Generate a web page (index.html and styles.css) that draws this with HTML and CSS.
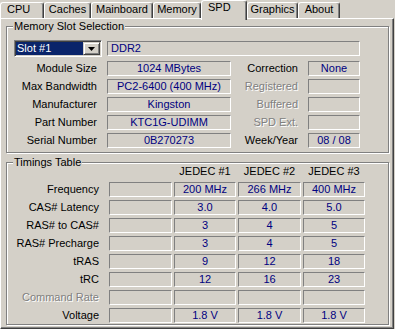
FILE: index.html
```html
<!DOCTYPE html>
<html>
<head>
<meta charset="utf-8">
<link rel="stylesheet" href="styles.css">
</head>
<body>
<div class="tabs">
  <div class="tab t-cpu">CPU</div>
  <div class="tab t-caches">Caches</div>
  <div class="tab t-main">Mainboard</div>
  <div class="tab t-mem">Memory</div>
  <div class="tab sel t-spd">SPD</div>
  <div class="tab t-gfx">Graphics</div>
  <div class="tab t-about">About</div>
</div>
<div class="panel">
  <div class="group g-slot">
    <span class="group-title">Memory Slot Selection</span>
    <div class="slot-row">
      <div class="combo">
        <div class="combo-sel">Slot #1</div>
        <div class="combo-btn"><svg width="7" height="4" viewBox="0 0 7 4"><polygon points="0,0 7,0 3.5,4" fill="#000"/></svg></div>
      </div>
      <div class="f f-type">DDR2</div>
    </div>
    <div class="info">
      <div class="lbl">Module Size</div><div class="f">1024 MBytes</div>
      <div class="lbl">Correction</div><div class="f">None</div>
      <div class="lbl">Max Bandwidth</div><div class="f">PC2-6400 (400 MHz)</div>
      <div class="lbl dis">Registered</div><div class="f"></div>
      <div class="lbl">Manufacturer</div><div class="f">Kingston</div>
      <div class="lbl dis">Buffered</div><div class="f"></div>
      <div class="lbl">Part Number</div><div class="f">KTC1G-UDIMM</div>
      <div class="lbl dis">SPD Ext.</div><div class="f"></div>
      <div class="lbl">Serial Number</div><div class="f">0B270273</div>
      <div class="lbl">Week/Year</div><div class="f">08 / 08</div>
    </div>
  </div>
  <div class="group g-timings">
    <span class="group-title">Timings Table</span>
    <div class="timings">
      <div></div><div></div><div class="hd">JEDEC #1</div><div class="hd">JEDEC #2</div><div class="hd">JEDEC #3</div>
      <div class="lbl">Frequency</div><div class="f"></div><div class="f">200 MHz</div><div class="f">266 MHz</div><div class="f">400 MHz</div>
      <div class="lbl">CAS# Latency</div><div class="f"></div><div class="f">3.0</div><div class="f">4.0</div><div class="f">5.0</div>
      <div class="lbl">RAS# to CAS#</div><div class="f"></div><div class="f">3</div><div class="f">4</div><div class="f">5</div>
      <div class="lbl">RAS# Precharge</div><div class="f"></div><div class="f">3</div><div class="f">4</div><div class="f">5</div>
      <div class="lbl">tRAS</div><div class="f"></div><div class="f">9</div><div class="f">12</div><div class="f">18</div>
      <div class="lbl">tRC</div><div class="f"></div><div class="f">12</div><div class="f">16</div><div class="f">23</div>
      <div class="lbl dis">Command Rate</div><div class="f"></div><div class="f"></div><div class="f"></div><div class="f"></div>
      <div class="lbl">Voltage</div><div class="f"></div><div class="f">1.8 V</div><div class="f">1.8 V</div><div class="f">1.8 V</div>
    </div>
  </div>
</div>
</body>
</html>
```
FILE: styles.css
```css
html, body {
  margin: 0;
  padding: 0;
}
body {
  background: #d4d0c8;
  font-family: "Liberation Sans", Arial, sans-serif;
  font-size: 11px;
  color: #000;
  width: 395px;
  height: 329px;
  overflow: hidden;
}

/* Tabs */
.tabs {
  display: flex;
  align-items: flex-end;
  height: 18px;
  position: relative;
  z-index: 2;
}
.tab {
  box-sizing: border-box;
  height: 16px;
  border: 1px solid #fff;
  border-bottom: none;
  border-right-color: #404040;
  box-shadow: inset -1px 0 #808080;
  border-radius: 3px 3px 0 0;
  background: #d4d0c8;
  line-height: 13px;
  text-align: center;
  white-space: nowrap;
}
.tab.sel {
  height: 20px;
  margin-bottom: -2px;
}
.t-cpu { width: 44px; text-align: left; padding-left: 6px; }
.t-caches { width: 47px; }
.t-main { width: 62px; }
.t-mem { width: 48px; }
.t-spd { width: 46px; text-align: left; padding-left: 6px; }
.t-gfx { width: 51px; }
.t-about { width: 42px; }

/* Panel */
.panel {
  box-sizing: border-box;
  width: 394px;
  height: 311px;
  border: 1px solid;
  border-color: #fff #404040 #404040 #fff;
  box-shadow: inset -1px -1px #808080;
  padding: 7px 0 0 5px;
  position: relative;
  z-index: 1;
}

/* Group boxes */
.group {
  position: relative;
  box-sizing: border-box;
  width: 383px;
  border: 1px solid #808080;
  box-shadow: inset 1px 1px #fff, 1px 1px #fff;
}
.group-title {
  position: absolute;
  top: -7px;
  left: 6px;
  padding: 0 1px;
  line-height: 13px;
  background: #d4d0c8;
  white-space: nowrap;
}
.g-slot {
  padding: 13px 0 4px 7px;
}
.g-timings {
  margin-top: 9px;
  padding: 1px 0 1px 7px;
}

/* Slot row */
.slot-row {
  display: flex;
  align-items: center;
  height: 17px;
}
.combo {
  box-sizing: border-box;
  display: flex;
  width: 88px;
  height: 17px;
  margin-right: 5px;
  padding: 1px;
  border: 1px solid;
  border-color: #808080 #fff #fff #808080;
  box-shadow: inset 1px 1px #404040, inset -1px -1px #d4d0c8;
  background: #fff;
}
.combo-sel {
  width: 67px;
  height: 13px;
  background: #0a246a;
  color: #fff;
  line-height: 13px;
  padding-left: 1px;
  box-sizing: border-box;
}
.combo-btn {
  box-sizing: border-box;
  width: 17px;
  height: 13px;
  border: 1px solid;
  border-color: #d4d0c8 #404040 #404040 #d4d0c8;
  box-shadow: inset 1px 1px #fff, inset -1px -1px #808080;
  background: #d4d0c8;
  display: flex;
  align-items: center;
  justify-content: center;
}
.combo-btn svg {
  display: block;
}

/* Fields */
.f {
  box-sizing: border-box;
  height: 15px;
  border: 1px solid;
  border-color: #808080 #fff #fff #808080;
  line-height: 13px;
  text-align: center;
  color: #000080;
  white-space: nowrap;
  overflow: hidden;
}
.f-type {
  width: 253px;
  text-align: left;
  padding-left: 3px;
}

.lbl {
  line-height: 15px;
  text-align: right;
  padding-right: 10px;
  white-space: nowrap;
}
.dis {
  color: #808080;
  text-shadow: 1px 1px 0 #fff;
}

.info {
  display: grid;
  grid-template-columns: 93px 124px 77px 52px;
  grid-auto-rows: 15px;
  row-gap: 3px;
  margin-top: 4px;
}

.timings {
  display: grid;
  grid-template-columns: 93px 63px 62px 63px 62px;
  grid-auto-rows: 15px;
  row-gap: 3px;
  column-gap: 2px;
}
.timings .lbl {
  margin-right: -2px;
}
.hd {
  line-height: 15px;
  text-align: center;
  white-space: nowrap;
}
```
